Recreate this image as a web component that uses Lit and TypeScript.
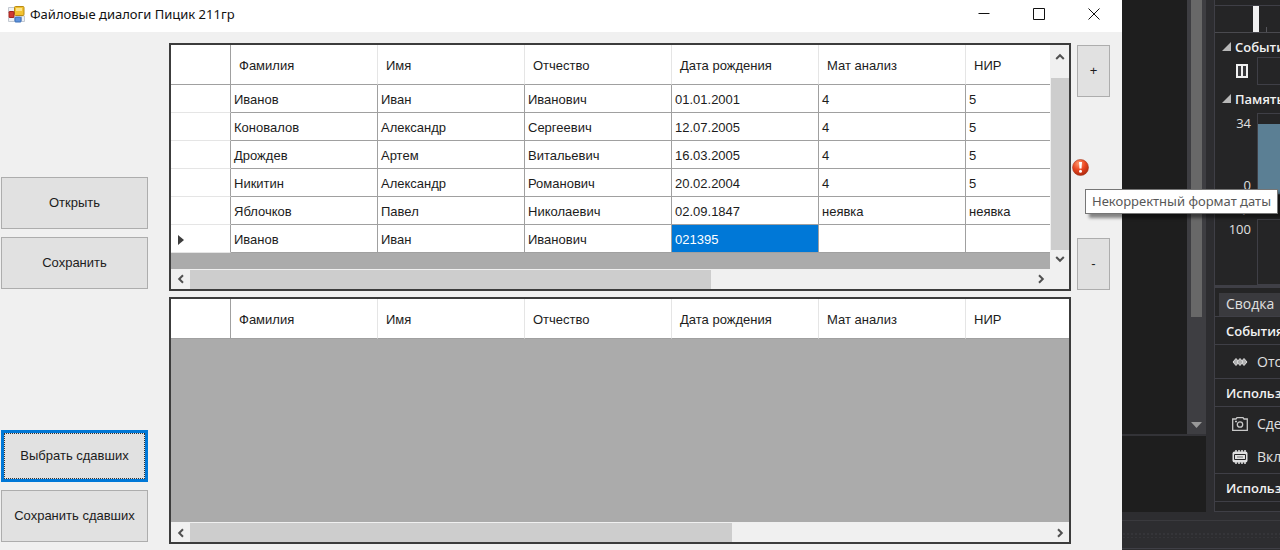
import { LitElement, html, css, svg } from "lit";
import { customElement, property } from "lit/decorators.js";
import { classMap } from "lit/directives/class-map.js";

const COLUMNS = ["Фамилия", "Имя", "Отчество", "Дата рождения", "Мат анализ", "НИР"];

const STUDENTS = [
  ["Иванов", "Иван", "Иванович", "01.01.2001", "4", "5"],
  ["Коновалов", "Александр", "Сергеевич", "12.07.2005", "4", "5"],
  ["Дрождев", "Артем", "Витальевич", "16.03.2005", "4", "5"],
  ["Никитин", "Александр", "Романович", "20.02.2004", "4", "5"],
  ["Яблочков", "Павел", "Николаевич", "02.09.1847", "неявка", "неявка"],
  ["Иванов", "Иван", "Иванович", "021395", "", ""],
];

const chevron = (angle: number) => html`
  <svg width="10" height="10" viewBox="0 0 10 10" aria-hidden="true">
    ${svg`<path d="M1.2 7 5 3.2 8.8 7" fill="none" stroke="#505050" stroke-width="2" transform="rotate(${angle} 5 5)"/>`}
  </svg>`;

/** Table with its own scroll bars, as a desktop grid control draws it. */
@customElement("data-grid")
export class DataGrid extends LitElement {
  @property({ attribute: false }) rows: string[][] = [];
  @property({ type: Number }) current = -1;
  @property({ type: Number }) selected = -1;
  @property({ type: Number }) thumb = 60;
  @property({ type: Boolean }) vertical = false;

  static styles = css`
    :host {
      display: grid;
      grid-template: minmax(0, 1fr) 20px / minmax(0, 1fr) auto;
      box-sizing: border-box;
      min-height: 0;
      border: 2px solid #3c3c3c;
      background: #f0f0f0;
      color: #1c1c1c;
      font: 13px/16px "Liberation Sans", Arial, sans-serif;
    }
    .view {
      overflow: hidden;
      background: #ababab;
    }
    table {
      table-layout: fixed;
      width: 942px;
      border-collapse: separate;
      border-spacing: 0;
      background: #fff;
    }
    .marker-col {
      width: 60px;
    }
    th,
    td {
      box-sizing: border-box;
      padding: 2px 4px 0 3px;
      border-right: 1px solid #a0a0a0;
      border-bottom: 1px solid #a0a0a0;
      text-align: left;
      font-weight: normal;
      white-space: nowrap;
    }
    td {
      height: 28px;
    }
    thead th {
      height: 40px;
      padding: 3px 4px 0 8px;
      border-right-color: #e5e5e5;
    }
    thead th:first-child {
      border-right-color: #a0a0a0;
    }
    tbody th {
      padding: 2px 0 0 7px;
      border-bottom-color: #e5e5e5;
    }
    tbody th svg {
      display: block;
    }
    .selected {
      background: #0078d7;
      color: #fff;
    }
    .bar {
      display: flex;
      background: #f0f0f0;
    }
    .bar.v {
      flex-direction: column;
      width: 19px;
      padding-left: 1px;
      box-sizing: border-box;
    }
    .bar.h {
      padding-top: 1px;
    }
    .step {
      display: flex;
      flex: none;
      align-items: center;
      justify-content: center;
      padding: 0;
      border: 0;
      background: none;
    }
    .v .step {
      height: 19px;
    }
    .v .step:first-child {
      height: 33px;
      padding-bottom: 10px;
    }
    .h .step {
      width: 19px;
    }
    .track {
      flex: 1;
    }
    .fill {
      height: 100%;
      background: #cdcdcd;
    }
  `;

  render() {
    return html`
      <div class="view">
        <table>
          <colgroup>
            <col class="marker-col" />
            ${COLUMNS.map(() => html`<col />`)}
          </colgroup>
          <thead>
            <tr>
              <th></th>
              ${COLUMNS.map((c) => html`<th scope="col">${c}</th>`)}
            </tr>
          </thead>
          <tbody>
            ${this.rows.map(
              (row, r) => html`<tr>
                <th scope="row">
                  ${r === this.current
                    ? html`<svg width="7" height="12" viewBox="0 0 7 12"><path d="M0 1 6 6 0 11z" fill="#3c3c3c" /></svg>`
                    : ""}
                </th>
                ${row.map(
                  (cell, c) =>
                    html`<td class=${classMap({ selected: r === this.current && c === this.selected })}>${cell}</td>`,
                )}
              </tr>`,
            )}
          </tbody>
        </table>
      </div>
      ${this.vertical
        ? html`<div class="bar v">
            <button class="step" aria-label="Вверх">${chevron(0)}</button>
            <div class="track"><div class="fill"></div></div>
            <button class="step" aria-label="Вниз">${chevron(180)}</button>
          </div>`
        : html`<div></div>`}
      <div class="bar h">
        <button class="step" aria-label="Влево">${chevron(-90)}</button>
        <div class="track"><div class="fill" style="width:${this.thumb}%"></div></div>
        <button class="step" aria-label="Вправо">${chevron(90)}</button>
      </div>
    `;
  }
}

@customElement("marks-form")
export class MarksForm extends LitElement {
  static styles = css`
    :host {
      display: flex;
      flex-direction: column;
      position: relative;
      z-index: 1;
      min-width: 0;
      background: #f0f0f0;
      color: #1c1c1c;
      font: 13px/16px "Liberation Sans", Arial, sans-serif;
    }
    header {
      display: flex;
      align-items: center;
      height: 32px;
      padding: 0 1px 4px 8px;
      box-sizing: border-box;
      background: #fff;
    }
    h1 {
      flex: 1;
      margin: 0 0 0 5px;
      font: 13px/20px "Noto Sans", sans-serif;
      color: #111;
    }
    .caption {
      width: 55px;
      height: 28px;
      padding: 0;
      border: 0;
      background: none;
    }
    .caption svg {
      display: block;
      margin: auto;
    }
    main {
      flex: 1;
      min-height: 0;
      display: grid;
      grid-template: minmax(0, 1fr) minmax(0, 1fr) / 147px minmax(0, 1fr) 33px;
      row-gap: 6px;
      padding: 11px 12px 6px 1px;
    }
    data-grid {
      margin: 0 6px 0 21px;
    }
    .actions {
      display: flex;
      flex-direction: column;
      justify-content: flex-end;
      gap: 8px;
      padding-bottom: 2px;
    }
    .btn {
      height: 52px;
      padding: 0;
      border: 1px solid #adadad;
      background: #e1e1e1;
      color: inherit;
      font: inherit;
    }
    .default {
      border: 3px solid #0078d7;
      outline: 1px dotted #333;
      outline-offset: -4px;
    }
    .edit {
      display: flex;
      flex-direction: column;
      justify-content: space-between;
      padding: 2px 0 1px;
    }
    .error {
      position: relative;
      width: 17px;
      margin-left: -5px;
    }
    .error svg {
      display: block;
    }
    .tip {
      position: absolute;
      left: 13px;
      top: 30px;
      padding: 2px 6px 3px;
      border: 1px solid #767676;
      background: #fff;
      box-shadow: 4px 4px 3px rgba(0, 0, 0, 0.45);
      color: #575757;
      font: 13px/18px "Noto Sans", sans-serif;
      white-space: nowrap;
    }
  `;

  render() {
    return html`
      <header>
        <svg width="17" height="17" viewBox="0 0 17 17" aria-hidden="true">
          <path d="M.5 1.500h6v5h-6zM.5 11.500h6v4h-6zM13.500 10h3v5.500h-3z" fill="#eef1f5" stroke="#c3c9d1" />
          <rect x="6.500" y=".5" width="9.500" height="9" rx="1" fill="#f2c230" stroke="#b98a12" />
          <path d="M8 2h6v3H8z" fill="#fbe38a" />
          <rect x="1" y="5.500" width="5" height="6" rx=".5" fill="#cf3a32" stroke="#9e231f" />
          <rect x="7" y="11" width="6" height="5" rx=".5" fill="#5f93dc" stroke="#3b6db5" />
        </svg>
        <h1>Файловые диалоги Пицик 211гр</h1>
        <button class="caption" aria-label="Свернуть">
          <svg width="12" height="12" viewBox="0 0 12 12"><path d="M.5 5.500h11" stroke="#111" /></svg>
        </button>
        <button class="caption" aria-label="Развернуть">
          <svg width="12" height="12" viewBox="0 0 12 12"><path d="M.5.500h11v11H.5z" fill="none" stroke="#111" /></svg>
        </button>
        <button class="caption" aria-label="Закрыть">
          <svg width="12" height="12" viewBox="0 0 12 12"><path d="m.5.500 11 11m0-11-11 11" stroke="#111" /></svg>
        </button>
      </header>
      <main>
        <div class="actions">
          <button class="btn">Открыть</button>
          <button class="btn">Сохранить</button>
        </div>
        <data-grid .rows=${STUDENTS} .current=${5} .selected=${3} .thumb=${62} vertical></data-grid>
        <div class="edit">
          <button class="btn">+</button>
          <div class="error" role="img" aria-label="Ошибка">
            <svg width="17" height="17" viewBox="0 0 17 17">
              <defs>
                <radialGradient id="ball" cx=".4" cy=".25" r=".8">
                  <stop offset="0" stop-color="#ff9a70" />
                  <stop offset=".5" stop-color="#ea4620" />
                  <stop offset="1" stop-color="#a8260c" />
                </radialGradient>
              </defs>
              <circle cx="8.500" cy="8.500" r="8" fill="url(#ball)" stroke="#a5391f" stroke-width=".6" />
              <path d="M7 3h3l-.5 6.500h-2z" fill="#fff" />
              <circle cx="8.500" cy="12.300" r="1.500" fill="#fff" />
            </svg>
            <div class="tip" role="tooltip">Некорректный формат даты</div>
          </div>
          <button class="btn">-</button>
        </div>
        <div class="actions">
          <button class="btn default">Выбрать сдавших</button>
          <button class="btn">Сохранить сдавших</button>
        </div>
        <data-grid .thumb=${63}></data-grid>
      </main>
    `;
  }
}

@customElement("diagnostics-pane")
export class DiagnosticsPane extends LitElement {
  static styles = css`
    :host {
      display: grid;
      grid-template: minmax(0, 1fr) 38px / minmax(0, 1fr) 66px;
      overflow: hidden;
      background: #2d2d30;
      color: #f1f1f1;
      font: 14px/20px "Open Sans", "Noto Sans", sans-serif;
    }
    .code {
      display: grid;
      grid-template: minmax(0, 1fr) 76px / minmax(0, 1fr) 19px;
      row-gap: 2px;
      margin-right: 8px;
      background: #333337;
    }
    .text,
    .output {
      background: #1e1e1e;
    }
    .output {
      grid-column: 1 / 3;
    }
    .scroll {
      display: flex;
      flex-direction: column;
      justify-content: space-between;
      align-items: center;
      padding-bottom: 6px;
      background: #3e3e42;
    }
    .thumb {
      width: 11px;
      height: 74%;
      background: #686868;
    }
    .panel {
      overflow: hidden;
      border-left: 1px solid #3f3f46;
      border-bottom: 1px solid #3f3f46;
      background: #252526;
      white-space: nowrap;
    }
    .ruler {
      display: flex;
      gap: 7px;
      align-items: flex-end;
      height: 26px;
      margin-top: 5px;
      padding-left: 38px;
      border-top: 1px solid #3f3f46;
      border-bottom: 1px solid #4a4a4f;
    }
    .handle {
      width: 6px;
      height: 26px;
      background: #f1f1f1;
    }
    .tick {
      width: 1px;
      height: 5px;
      background: #55555a;
    }
    h2,
    h3 {
      display: flex;
      align-items: center;
      gap: 4px;
      margin: 0;
      font: 600 13px/20px "Open Sans", "Noto Sans", sans-serif;
    }
    h2 {
      padding: 4px 0 0 6px;
    }
    h2 svg {
      flex: none;
    }
    .lane {
      display: grid;
      grid-template-columns: 36px minmax(0, 1fr);
      column-gap: 6px;
    }
    .lane svg {
      justify-self: end;
      align-self: center;
      margin-right: 3px;
    }
    .events {
      height: 28px;
    }
    .memory {
      height: 82px;
      margin-top: 4px;
    }
    .cpu {
      height: 66px;
    }
    .box {
      border: 1px solid #3f3f46;
      border-right: 0;
    }
    .fill {
      height: 100%;
      margin-top: 10px;
      background: #5b7f94;
    }
    .memory .box {
      overflow: hidden;
    }
    .axis {
      display: flex;
      flex-direction: column;
      justify-content: space-between;
      text-align: right;
      color: #e0e0e0;
      font-size: 13px;
    }
    h2.cpu-title {
      height: 24px;
      padding-top: 0;
      box-sizing: border-box;
    }
    .tabs {
      height: 31px;
      padding: 5px 0 0 4px;
      border-top: 3px solid #3f3f46;
      box-sizing: border-box;
    }
    .tab {
      display: block;
      padding: 1px 7px 2px;
      background: #3a3a3e;
      color: #e0e0e0;
      line-height: 20px;
    }
    h3 {
      height: 27px;
      padding-left: 11px;
      border-top: 1px solid #3f3f46;
      border-bottom: 1px solid #3f3f46;
    }
    .row {
      display: flex;
      align-items: center;
      gap: 9px;
      height: 33px;
      padding-left: 17px;
      color: #e0e0e0;
    }
    .row svg {
      flex: none;
    }
    .status {
      grid-column: 1 / 3;
      display: flex;
      align-items: center;
      margin: 8px 0 1px;
      border-top: 1px solid #3a3a3e;
      border-bottom: 1px solid #3f3f46;
    }
    .grip {
      flex: 1;
      height: 6px;
      background: radial-gradient(#353539 1px, transparent 1px) 0 0 / 4px 4px;
    }
  `;

  private arrow = () => html`
    <svg width="10" height="10" viewBox="0 0 10 10"><path d="M10 0v9H1z" fill="#b8b8b8" /></svg>`;

  render() {
    return html`
      <div class="code">
        <div class="text"></div>
        <div class="scroll">
          <div class="thumb"></div>
          <svg width="11" height="6" viewBox="0 0 11 6"><path d="M0 0h11L5.500 6z" fill="#999" /></svg>
        </div>
        <div class="output"></div>
      </div>
      <div class="panel">
        <div class="ruler"><div class="handle"></div><div class="tick"></div></div>
        <h2>${this.arrow()}События</h2>
        <div class="lane events">
          <svg width="12" height="14" viewBox="0 0 12 14">
            <path d="M0 0h12v14H0z" fill="#f1f1f1" />
            <path d="M2 2h3v10H2zM7 2h3v10H7z" fill="#3a3a3d" />
          </svg>
          <div class="box"></div>
        </div>
        <h2>${this.arrow()}Память</h2>
        <div class="lane memory">
          <div class="axis"><span>34</span><span>0</span></div>
          <div class="box"><div class="fill"></div></div>
        </div>
        <h2 class="cpu-title">${this.arrow()}ЦП</h2>
        <div class="lane cpu">
          <div class="axis"><span>100</span></div>
          <div class="box"></div>
        </div>
        <div class="tabs"><a class="tab">Сводка</a></div>
        <h3>События</h3>
        <div class="row">
          <svg width="16" height="10" viewBox="0 0 16 10" fill="#b0b0b0" stroke="#dcdcdc">
            <path d="m4 1.500 3 3.500-3 3.500L1 5z" />
            <path d="m12 1.500 3 3.500-3 3.500L9 5z" />
            <path d="m8 1.500 3 3.500-3 3.500L5 5z" />
          </svg>
          Отс
        </div>
        <h3>Использ</h3>
        <div class="row">
          <svg width="16" height="14" viewBox="0 0 16 14" fill="none" stroke="#c8c8c8" stroke-width="1.300">
            <path d="M.7 2h3.300l1-1.300h6L12 2h3.300v11.300H.7z" />
            <circle cx="8" cy="7.500" r="2.700" />
            <path d="M3 4.500h2" />
          </svg>
          Сде
        </div>
        <div class="row">
          <svg width="16" height="16" viewBox="0 0 16 16">
            <path d="M4 1v14M7 1v14M10 1v14M13 1v14" stroke="#e0e0e0" stroke-width="1.500" />
            <rect x=".5" y="2.500" width="15" height="11" rx="2" fill="#e0e0e0" />
            <path d="M2.500 5.500h11v5h-11z" fill="#e0e0e0" stroke="#252526" />
            <path d="M5 8h6" stroke="#777" />
          </svg>
          Вкл
        </div>
        <h3>Использ</h3>
        <div class="row">
          <svg width="16" height="14" viewBox="0 0 16 14"><circle cx="8" cy="7" r="6" fill="none" stroke="#c8c8c8" stroke-width="2" /></svg>
        </div>
      </div>
      <div class="status"><div class="grip"></div></div>
    `;
  }
}

@customElement("app-root")
export class AppRoot extends LitElement {
  static styles = css`
    :host {
      display: grid;
      grid-template: minmax(0, 1fr) / minmax(0, 1fr) 158px;
      height: 100vh;
      overflow: hidden;
    }
  `;

  render() {
    return html`<marks-form></marks-form><diagnostics-pane></diagnostics-pane>`;
  }
}
